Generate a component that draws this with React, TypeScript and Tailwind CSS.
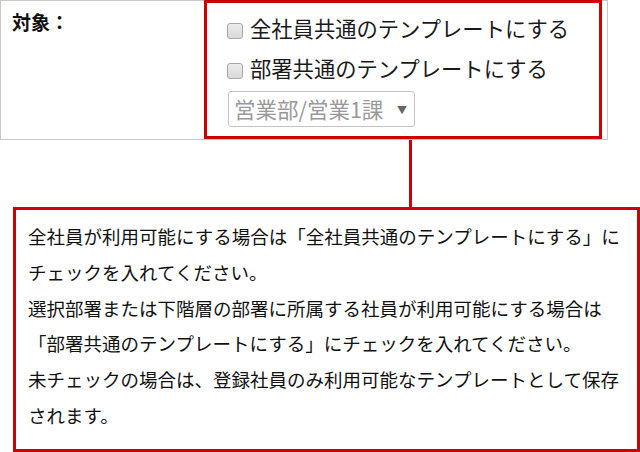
const lines = [
  '全社員が利用可能にする場合は「全社員共通のテンプレートにする」に',
  'チェックを入れてください。',
  '選択部署または下階層の部署に所属する社員が利用可能にする場合は',
  '「部署共通のテンプレートにする」にチェックを入れてください。',
  '未チェックの場合は、登録社員のみ利用可能なテンプレートとして保存',
  'されます。',
];

function Check({ label }: { label: string }) {
  return (
    <label className="flex items-center gap-[7px] h-[40px] leading-[40px] text-[21.3px] text-[#1a1a1a]">
      <span className="mt-[6px] w-4 h-4 shrink-0 rounded-[3px] border border-[#a8a8a8] bg-gradient-to-b from-[#ececec] to-[#d9d9d9]"></span>
      <span className="whitespace-nowrap">{label}</span>
    </label>
  );
}

export default function App() {
  return (
    <div className="w-[640px] h-[452px] bg-white overflow-hidden font-['Noto_Sans_CJK_JP','Noto_Sans',sans-serif]">
      <div className="flex w-[608px] h-[140px] border border-[#c8c8c8]">
        <div className="w-[203px] pl-[11px] pt-[8px] text-[19px] leading-[26px] font-bold text-[#111]">対象：</div>
        <div className="-mt-px w-[398px] h-[139px] border-[3px] border-[#cc0000] pl-[20px] pt-[5px]">
          <Check label="全社員共通のテンプレートにする" />
          <Check label="部署共通のテンプレートにする" />
          <div className="mt-[3px] ml-[1px] w-[187px] h-[36px] border border-[#c4c4c4] rounded-[3px] flex items-center justify-between pl-[5px] pr-[7px]">
            <span className="text-[21.5px] leading-none text-[#999] whitespace-nowrap">営業部/営業1課</span>
            <span className="text-[10px] text-[#666]">▼</span>
          </div>
        </div>
      </div>

      <div className="ml-[409px] w-[3px] h-[67px] bg-[#cc0000]"></div>

      <div className="ml-[13px] w-[627px] h-[245px] border-[3px] border-[#cc0000] pl-[12px] pt-[9px] text-[18.5px] leading-[35.8px] text-[#111]">
        {lines.map((l) => (
          <p key={l} className="whitespace-nowrap">{l}</p>
        ))}
      </div>
    </div>
  );
}
